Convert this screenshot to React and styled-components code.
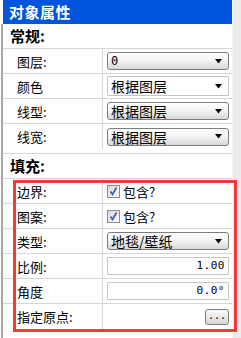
import React from 'react';
import styled, { createGlobalStyle } from 'styled-components';

const GlobalStyle = createGlobalStyle`
  html, body {
    margin: 0;
    padding: 0;
    background: #ffffff;
  }
  body {
    font-family: "Noto Sans CJK SC", "Liberation Sans", sans-serif;
    font-size: 13px;
    color: #000;
  }
`;

const Arrow = () => (
  <svg width="8" height="5" viewBox="0 0 8 5">
    <path d="M0 0 H7 L3.5 4.5 Z" fill="#000" />
  </svg>
);

const Check = () => (
  <CheckBox>
    <svg width="11" height="11" viewBox="0 0 11 11">
      <path d="M2.5 5.5 L4.5 8.5 L8.5 1.5" stroke="#3a56b4" strokeWidth="1.6" fill="none" />
    </svg>
  </CheckBox>
);

const rows1 = [
  { label: '图层:', type: 'combo', value: '0' },
  { label: '颜色', type: 'flat', value: '根据图层' },
  { label: '线型:', type: 'combo', value: '根据图层' },
  { label: '线宽:', type: 'combo', value: '根据图层' },
];

const rows2 = [
  { label: '边界:', type: 'check', value: '包含?' },
  { label: '图案:', type: 'check', value: '包含?' },
  { label: '类型:', type: 'combo', value: '地毯/壁纸' },
  { label: '比例:', type: 'input', value: '1.00' },
  { label: '角度', type: 'input', value: '0.0°' },
  { label: '指定原点:', type: 'button', value: '...' },
];

const renderValue = (row) => {
  if (row.type === 'combo' || row.type === 'flat') {
    return (
      <Combo $flat={row.type === 'flat'}>
        <ComboText $big={row.value !== '0'}>{row.value}</ComboText>
        <Arrow />
      </Combo>
    );
  }
  if (row.type === 'check') {
    return (
      <CheckRow>
        <Check />
        <span>{row.value}</span>
      </CheckRow>
    );
  }
  if (row.type === 'input') {
    return <Input>{row.value}</Input>;
  }
  return (
    <ButtonCell>
      <DotsButton>{row.value}</DotsButton>
    </ButtonCell>
  );
};

const App = () => {
  return (
    <>
      <GlobalStyle />
      <Frame>
        <Panel>
          <TitleBar>对象属性</TitleBar>
          <Body>
            <SectionHead>常规:</SectionHead>
            {rows1.map((r, i) => (
              <Row key={r.label} $last={i === rows1.length - 1}>
                <Label>{r.label}</Label>
                <Cell>{renderValue(r)}</Cell>
              </Row>
            ))}
            <SectionHead $top>填充:</SectionHead>
            {rows2.map((r, i) => (
              <Row key={r.label} $last={i === rows2.length - 1}>
                <Label>{r.label}</Label>
                <Cell>{renderValue(r)}</Cell>
              </Row>
            ))}
          </Body>
        </Panel>
        <ScrollTrack />
        <Highlight />
      </Frame>
    </>
  );
};

export default App;

const Frame = styled.div`
  position: relative;
  width: 241px;
  height: 338px;
  display: flex;
  overflow: hidden;
`;

const Panel = styled.div`
  width: 232px;
  display: flex;
  flex-direction: column;
`;

const TitleBar = styled.div`
  height: 24px;
  margin-left: 3px;
  background: #0055dc;
  color: #fff;
  font-weight: bold;
  font-size: 15px;
  line-height: 24px;
  padding-left: 6px;
  letter-spacing: 0.5px;
`;

const Body = styled.div`
  flex: 1;
  margin-left: 1px;
  border-left: 2px solid #a8a8a8;
  display: flex;
  flex-direction: column;
`;

const SectionHead = styled.div`
  height: 24px;
  line-height: 24px;
  font-weight: bold;
  font-size: 15px;
  padding-left: 7px;
  border-bottom: 1px solid #d6d6d6;
  border-top: ${(p) => (p.$top ? '1px solid #d6d6d6' : 'none')};
  margin-top: ${(p) => (p.$top ? '4px' : '0')};
`;

const Row = styled.div`
  height: ${(p) => (p.$last ? '25px' : '24px')};
  display: grid;
  grid-template-columns: 100px 1fr;
  border-bottom: ${(p) => (p.$last ? 'none' : '1px solid #d6d6d6')};
`;

const Label = styled.div`
  display: flex;
  align-items: center;
  padding-left: 14px;
  border-right: 1px solid #d6d6d6;
`;

const Cell = styled.div`
  display: flex;
  align-items: center;
  padding: 0 3px 0 4px;
`;

const Combo = styled.div`
  flex: 1;
  height: ${(p) => (p.$flat ? '18px' : '16px')};
  display: flex;
  align-items: center;
  justify-content: space-between;
  padding: 0 5px 0 3px;
  border: 1px solid ${(p) => (p.$flat ? '#c4c4c4' : '#7c7c7c')};
  border-radius: ${(p) => (p.$flat ? '1px' : '3px')};
  background: ${(p) =>
    p.$flat ? '#ffffff' : 'linear-gradient(#ffffff 0%, #f4f4f4 45%, #d8d8d8 100%)'};
`;

const ComboText = styled.span`
  font-size: ${(p) => (p.$big ? '14px' : '12px')};
  font-family: ${(p) => (p.$big ? '"Noto Sans CJK SC", sans-serif' : '"DejaVu Sans Mono", monospace')};
  line-height: 16px;
`;

const CheckRow = styled.div`
  display: flex;
  align-items: center;
  gap: 3px;
  font-size: 13px;
`;

const CheckBox = styled.div`
  width: 11px;
  height: 11px;
  border: 1px solid #8c8c8c;
  background: linear-gradient(135deg, #d8d8d8, #fafafa);
  display: flex;
`;

const Input = styled.div`
  flex: 1;
  height: 16px;
  border: 1px solid #c4c4c4;
  border-radius: 1px;
  text-align: right;
  padding-right: 3px;
  font-family: "DejaVu Sans Mono", monospace;
  font-size: 11px;
  line-height: 16px;
  letter-spacing: 0.5px;
`;

const ButtonCell = styled.div`
  flex: 1;
  display: flex;
  justify-content: flex-end;
`;

const DotsButton = styled.div`
  width: 22px;
  height: 14px;
  border: 1px solid #7c7c7c;
  border-radius: 3px;
  background: linear-gradient(#fafafa, #d6d6d6);
  font-family: "DejaVu Sans Mono", monospace;
  font-size: 10px;
  line-height: 12px;
  text-align: center;
`;

const ScrollTrack = styled.div`
  flex: 1;
  background: #ececec;
  border-left: 1px solid #f7f7f7;
`;

const Highlight = styled.div`
  position: absolute;
  left: 13px;
  top: 180px;
  width: 218px;
  height: 146px;
  border: 3px solid #f23a3a;
  pointer-events: none;
`;
